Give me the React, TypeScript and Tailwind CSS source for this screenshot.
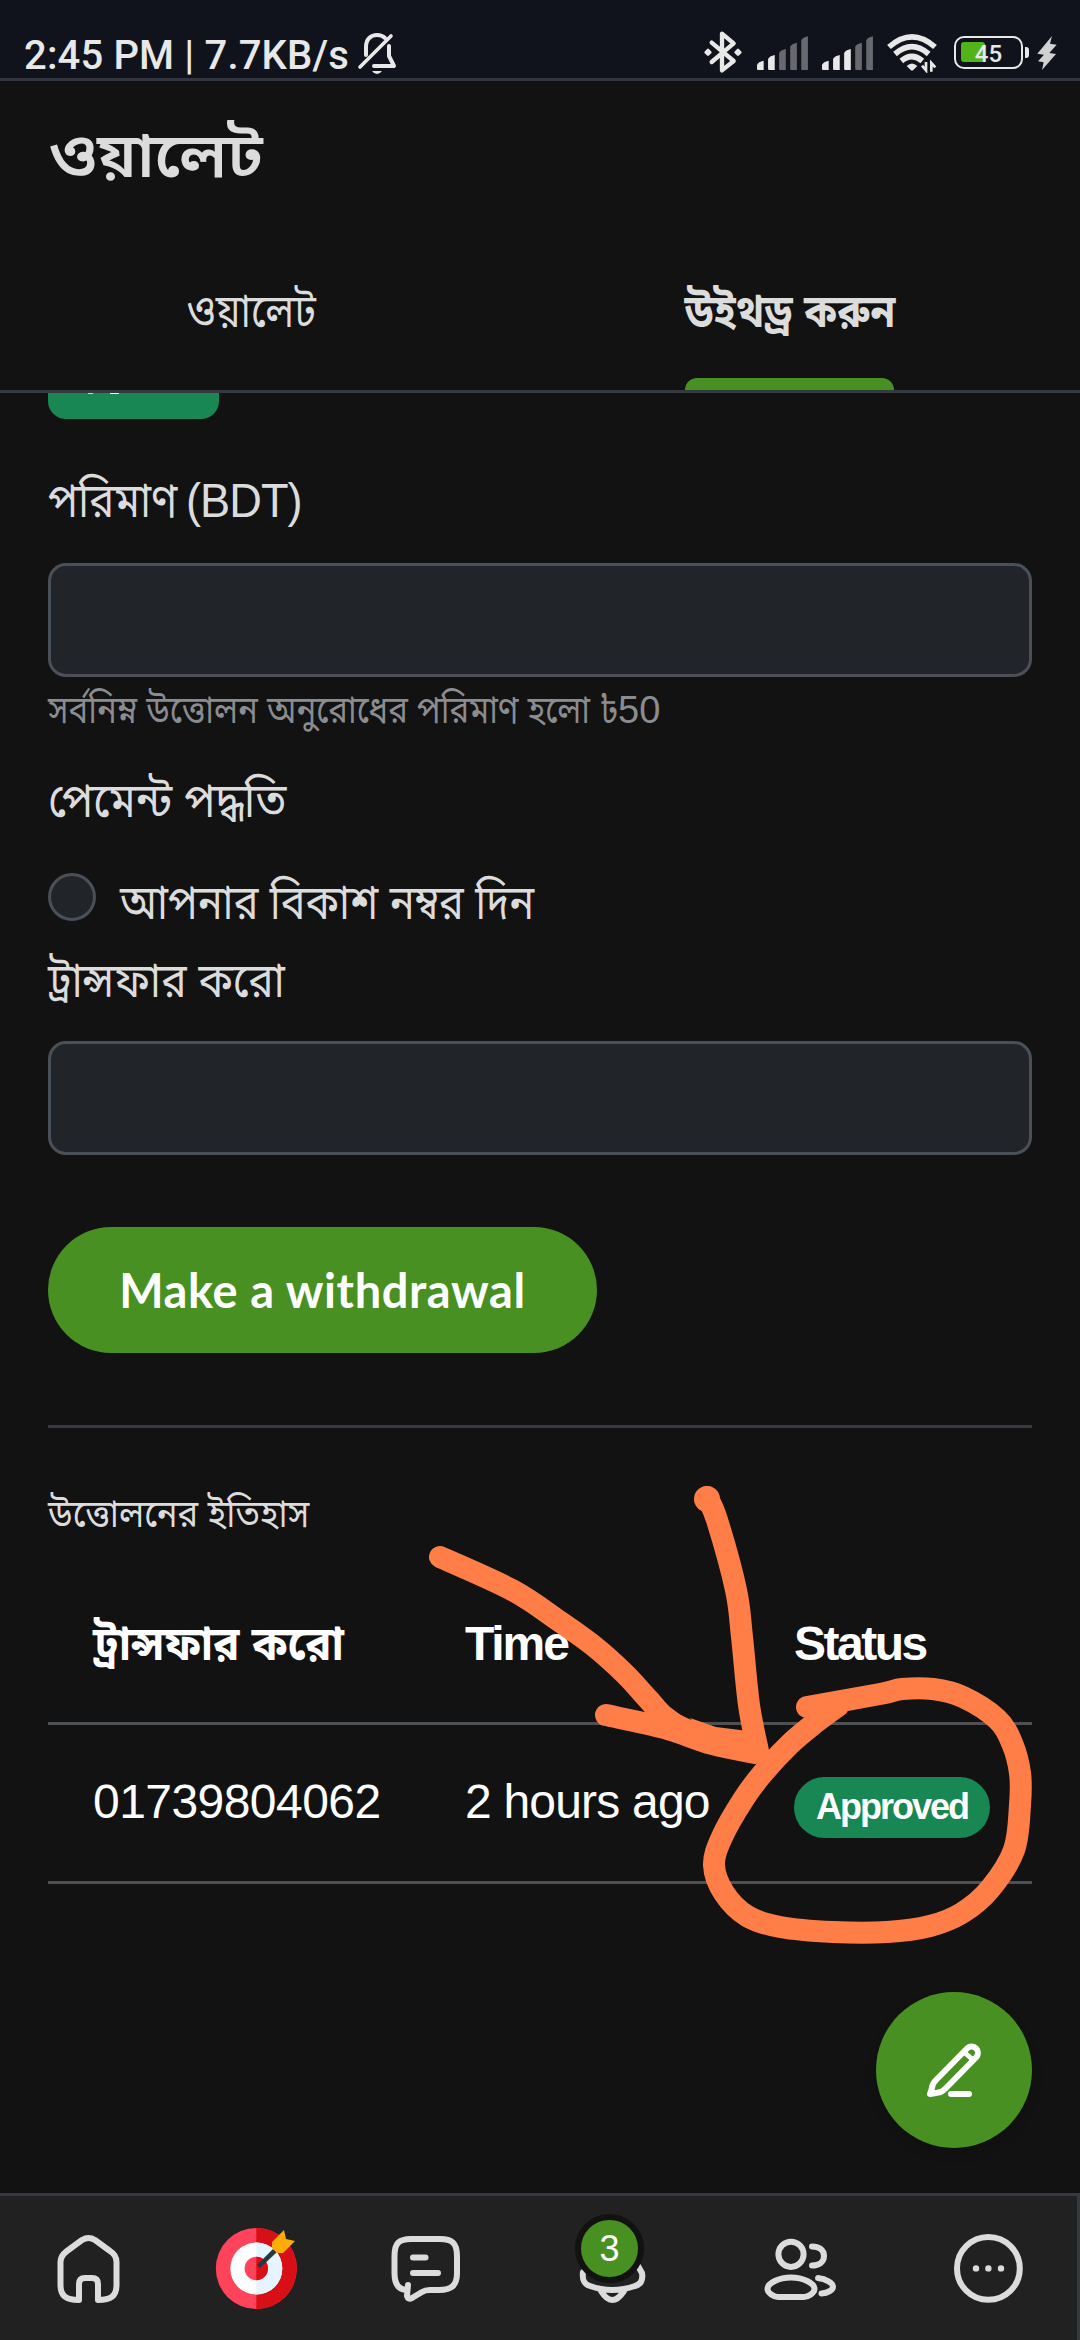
import type { ReactNode } from 'react'

const SANS = "font-['Liberation_Sans','Noto_Sans_Bengali','Noto_Sans',sans-serif]"

function MutedBell() {
  return (
    <svg width="42" height="46" viewBox="356 31 42 46" fill="none" stroke="#e8e8e8" strokeWidth="4" strokeLinecap="round" strokeLinejoin="round">
      <path d="M366 55V47C366 39 371 35 377 35C380 35 383 36 385 38" />
      <path d="M389 46V56L394 66H374" />
      <path d="M360 67L391 36" strokeWidth="3.6" />
      <path d="M372 71H382Q380 74 377 74T372 71Z" fill="#e8e8e8" stroke="none" />
    </svg>
  )
}

function Bluetooth() {
  return (
    <svg width="40" height="44" viewBox="126 90 120 132" fill="none" stroke="#e8e8e8" strokeWidth="13" strokeLinejoin="round" strokeLinecap="round">
      <path d="M152 128L218 183L183 211V101L218 130L152 186" />
      <path d="M141 150L148 157L141 164L134 157ZM231 150L238 157L231 164L224 157Z" fill="#e8e8e8" strokeWidth="8" />
    </svg>
  )
}

function Signal({ lit }: { lit: number }) {
  const tops = [182, 165, 147, 128, 109]
  return (
    <svg width="51" height="34" viewBox="288 108 153 102">
      {tops.map((top, i) => {
        const x = 288 + i * 33.2
        return (
          <path
            key={top}
            d={`M${x + 3} 210Q${x} 210 ${x} 207V${top + 12}Q${x + 4} ${top + 3} ${x + 20} ${top}V210Z`}
            fill={i < lit ? '#e8e8e8' : '#68696e'}
          />
        )
      })}
    </svg>
  )
}

function Wifi() {
  return (
    <svg width="50" height="40" viewBox="679 100 150 120" fill="none" stroke="#e8e8e8" strokeWidth="17">
      <path d="M685 142Q754 81 823 142" />
      <path d="M703 163Q754 119 804 163" />
      <path d="M722 184Q754 157 785 184" />
      <path d="M738 199Q754 184 770 199L757 212Q754 214 751 212Z" fill="#e8e8e8" stroke="none" />
      <path d="M796 187V212L784 198M812 216V190L824 203" strokeWidth="8" />
    </svg>
  )
}

function Battery() {
  return (
    <div className="flex items-center gap-[2px]">
      <div className="relative flex h-[33px] w-[69px] items-center justify-center rounded-[10px] border-[2.5px] border-[#e8e8e8]">
        <div className="absolute left-[5px] top-[4px] h-[20px] w-[24px] rounded-[3px] bg-[#52b41a]" />
        <span className="relative pt-[3px] font-[Roboto] text-[24px] font-medium leading-none text-[#e8e8e8]">45</span>
      </div>
      <div className="h-[11px] w-[4px] rounded-r-[3px] bg-[#e8e8e8]" />
    </div>
  )
}

function StatusBar() {
  return (
    <div className="flex h-[81px] items-start justify-between border-b-[3px] border-[#32363e] bg-[#10131b] pl-[24px]">
      <div className="flex pt-[31px]">
        <span className="mt-[1px] w-[332px] whitespace-nowrap font-[Roboto] text-[40px] font-medium leading-[47px] tracking-[0.15px] text-[#e8e8e8]">
          2:45 PM | 7.7KB/s
        </span>
        <MutedBell />
      </div>
      <div className="flex items-start pr-[23px] pt-[30px]">
        <Bluetooth />
        <div className="ml-[14px] mt-[6px]"><Signal lit={2} /></div>
        <div className="ml-[14px] mt-[6px]"><Signal lit={3} /></div>
        <div className="ml-[14px] mt-[3px]"><Wifi /></div>
        <div className="ml-[17px] mt-[6px]"><Battery /></div>
        <svg className="ml-[8px] mt-[6px]" width="20" height="34" viewBox="1129 108 60 102" fill="#d0d1d3">
          <path d="M1174 108L1130 161L1150 164L1132 184L1149 187L1144 210L1186 162L1166 159L1188 134L1168 131Z" />
        </svg>
      </div>
    </div>
  )
}

function Header() {
  return (
    <header className="h-[312px] border-b-[3px] border-[#343a40]">
      <h1 className="h-[153px] origin-left scale-x-[1.035] whitespace-nowrap pl-[47px] pt-[33px] text-[62px] font-semibold leading-[84px] text-[#dcdcdc]">ওয়ালেট</h1>
      <nav className="flex h-[156px] text-[46px] text-[#dcdcdc]">
        <div className="flex w-[503px] justify-center">
          <span className="scale-x-[0.86] pt-[41px] leading-[72px]">ওয়ালেট</span>
        </div>
        <div className="flex w-[573px] justify-center">
          <div className="flex w-[209px] flex-col items-center justify-between">
            <span className="scale-x-[0.88] whitespace-nowrap pt-[41px] font-bold leading-[72px]">উইথড্র করুন</span>
            <div className="h-[12px] w-full rounded-t-[12px] bg-[#489021]" />
          </div>
        </div>
      </nav>
    </header>
  )
}

function Field() {
  return <div className="h-[114px] rounded-[18px] border-[3px] border-[#495057] bg-[#212529]" />
}

function WithdrawForm() {
  return (
    <form className="flex flex-col items-start text-[48px] text-[#dcdcdc]">
      {/* balance badge, scrolled under the header */}
      <div className="flex h-[26px] w-[171px] gap-[17px] rounded-b-[18px] bg-[#198754] pl-[40px]">
        <div className="h-px w-[5px] bg-white/70" />
        <div className="h-px w-[9px] bg-white" />
      </div>
      <label className="mt-[46px] flex whitespace-nowrap leading-[72px]">
        <span className="w-[138px] origin-left scale-x-[0.875]">পরিমাণ</span>
        <span className="origin-left scale-x-[0.94] tracking-[-1px]">(BDT)</span>
      </label>
      <div className="mt-[26px] w-full"><Field /></div>
      <p className="mt-[3px] flex whitespace-nowrap text-[38px] leading-[60px] text-[#8b8c90]">
        <span className="w-[570px] origin-left scale-x-[0.868]">সর্বনিম্ন উত্তোলন অনুরোধের পরিমাণ হলো ৳</span>
        <span>50</span>
      </p>
      <label className="mt-[25px] origin-left scale-x-[0.91] leading-[72px]">পেমেন্ট পদ্ধতি</label>
      <div className="mt-[30px] flex h-[72px]">
        <div className="mt-[6px] size-[48px] rounded-full border-[3px] border-[#495057] bg-[#212529]" />
        <span className="ml-[24px] origin-left scale-x-[0.863] leading-[72px]">আপনার বিকাশ নম্বর দিন</span>
      </div>
      <label className="mt-[6px] origin-left scale-x-[0.888] leading-[72px]">ট্রান্সফার করো</label>
      <div className="mt-[24px] w-full"><Field /></div>
      <button
        type="button"
        className="mt-[72px] h-[126px] w-[549px] whitespace-nowrap rounded-full bg-[#489021] font-[Lato] text-[47px] font-bold tracking-[0.6px] text-white"
      >
        Make a withdrawal
      </button>
    </form>
  )
}

function Cell({ children, className }: { children: ReactNode; className: string }) {
  return <div className={`whitespace-nowrap ${className}`}>{children}</div>
}

function History() {
  return (
    <section>
      <h2 className="mt-[56px] origin-left scale-x-[0.911] text-[38px] leading-[60px] text-[#dcdcdc]">উত্তোলনের ইতিহাস</h2>
      <div className="mt-[64px] text-[48px] leading-[72px] text-white">
        <div className="flex h-[117px] border-b-[3px] border-[#4d5154] font-bold">
          <Cell className="w-[417px] pl-[45px]">
            <span className="inline-block origin-left scale-x-[0.915]">ট্রান্সফার করো</span>
          </Cell>
          <Cell className="w-[329px] tracking-[-2.1px]">Time</Cell>
          <Cell className="tracking-[-2.5px]">Status</Cell>
        </div>
        <div className="flex h-[159px] border-b-[3px] border-[#4d5154] pt-[41px]">
          <Cell className="w-[417px] pl-[45px] tracking-[-0.55px]">01739804062</Cell>
          <Cell className="w-[329px] tracking-[-0.8px]">2 hours ago</Cell>
          <Cell className="mt-[11px] h-[61px] w-[196px] rounded-full bg-[#198754] text-center text-[36px] font-bold leading-[59px] tracking-[-2px]">
            Approved
          </Cell>
        </div>
      </div>
    </section>
  )
}

type Point = [number, number]

// Catmull-Rom spline through the points of a pen stroke
function penPath(pts: Point[]) {
  let d = `M${pts[0][0]} ${pts[0][1]}`
  for (let i = 0; i < pts.length - 1; i++) {
    const p0 = pts[i - 1] || pts[i]
    const p1 = pts[i]
    const p2 = pts[i + 1]
    const p3 = pts[i + 2] || p2
    d += `C${p1[0] + (p2[0] - p0[0]) / 6} ${p1[1] + (p2[1] - p0[1]) / 6} ${p2[0] - (p3[0] - p1[0]) / 6} ${p2[1] - (p3[1] - p1[1]) / 6} ${p2[0]} ${p2[1]}`
  }
  return d
}

const STROKES: Point[][] = [
  [[440, 1557], [512, 1590], [559, 1621], [595, 1647], [625, 1674], [648, 1699], [665, 1717], [690, 1731], [757, 1752]],
  [[606, 1715], [664, 1728], [712, 1744], [755, 1753]],
  [[707, 1497], [717, 1520], [736, 1590], [742, 1637], [749, 1705], [758, 1751]],
  [
    [807, 1707], [880, 1694], [902, 1689], [933, 1689], [963, 1697], [997, 1719], [1012, 1743], [1020, 1773], [1020, 1805],
    [1014, 1850], [990, 1889], [962, 1913], [930, 1926], [887, 1932], [833, 1932], [780, 1927], [747, 1916],
    [724, 1893], [714, 1865], [722, 1837], [743, 1800], [763, 1773], [790, 1744], [815, 1723], [838, 1706],
  ],
]

// Hand-drawn arrow and ring over the status column
function Markup() {
  return (
    <svg className="absolute left-[420px] top-[1460px]" width="660" height="500" viewBox="420 1460 660 500" fill="none" stroke="#ff7e47" strokeWidth="22" strokeLinecap="round" strokeLinejoin="round">
      {STROKES.map((pts, i) => <path key={i} d={penPath(pts)} />)}
      <circle cx="707" cy="1499" r="13" fill="#ff7e47" stroke="none" />
      <path d="M690 1718L716 1727L748 1731L756 1750L710 1741Z" fill="#ff7e47" stroke="none" />
    </svg>
  )
}

function ComposeButton() {
  return (
    <button type="button" className="absolute left-[876px] top-[1992px] size-[156px] rounded-full bg-[#489021] shadow-[0_6px_12px_rgba(0,0,0,0.15)]">
      <svg width="156" height="156" viewBox="876 1992 156 156" fill="none" stroke="#fff" strokeWidth="6" strokeLinejoin="round" strokeLinecap="round">
        <path d="M967.5 2048L936 2080Q932 2084 932 2088L930 2094L936 2093Q941 2093 945 2089L976.5 2057A6.4 6.4 0 0 0 967.5 2048Z" />
        <path d="M964 2052L973 2060" strokeWidth="5" />
        <path d="M951 2094H969" />
      </svg>
    </button>
  )
}

function BottomNav() {
  return (
    <nav className="absolute left-0 top-[2193px] flex h-[147px] w-[1080px] border-t-[3px] border-[#343a40] bg-[#212121]">
      <div className="relative grow">
        <svg width="1077" height="144" viewBox="0 2196 1077 144" fill="none" stroke="#dcdcdc" strokeWidth="6" strokeLinecap="round" strokeLinejoin="round">
          {/* home */}
          <path d="M79 2300V2284Q79 2278 85 2278H92Q98 2278 98 2284V2300C111 2300 116.500 2296 116.500 2285V2262Q116.500 2255 110 2251L95 2240Q88.500 2236 82 2240L67 2251Q60.500 2256 60.500 2262V2285C60.500 2296 66 2300 79 2300Z" />
          {/* goals */}
          <g stroke="none">
            <circle cx="256.300" cy="2268.500" r="40.500" fill="#ff435a" />
            <path d="M256.300 2228A40.500 40.500 0 0 1 256.300 2309Z" fill="#d80f17" />
            <circle cx="256.300" cy="2268.500" r="26" fill="#fff" />
            <path d="M256.300 2242.500A26 26 0 0 1 256.300 2294.500Z" fill="#e5f4fe" />
            <circle cx="256.300" cy="2268.500" r="11.700" fill="#ff435a" />
            <path d="M256.300 2256.800A11.700 11.700 0 0 1 256.300 2280.200Z" fill="#d80f17" />
            <path d="M257 2265L273 2249L277 2252L260 2268Z" fill="#26393d" />
            <path d="M284 2230L272 2242V2248L277 2253L283 2253L295 2241L286 2239Z" fill="#ffab08" />
          </g>
          {/* messages */}
          <path d="M408 2285L407 2296Q408 2300 412 2298L422 2292Q425 2290 430 2290H439C452 2290 457 2285 457 2273V2256C457 2243 452 2239 440 2239H411C399 2239 394.500 2243 394.500 2256V2273Q394.500 2289 406 2290" />
          <path d="M413 2257.500H425.500M413 2273H438" />
          {/* notifications */}
          <path d="M583 2272C582 2280 584 2284 590 2286Q612 2294 635 2286C642 2284 643 2279 642 2273L638 2266M601 2291Q612 2309 624 2291" />
          {/* friends */}
          <ellipse cx="791" cy="2254.300" rx="12.600" ry="12.600" />
          <path d="M791 2277.500C803 2277.500 814.500 2283 814.500 2289C814.500 2293 808 2297 804 2297H778C774 2297 767.500 2293 767.500 2289C767.500 2283 779 2277.500 791 2277.500Z" />
          <path d="M812 2246.500C819 2246.500 824 2250 824 2256S819 2265.500 812 2265.500M818 2278C826 2279 833 2283 833 2286.500S828 2293 821.500 2293.500" />
          {/* more */}
          <circle cx="988.400" cy="2268.400" r="31.400" />
          <g fill="#dcdcdc" stroke="none">
            <circle cx="976" cy="2268.400" r="3.200" />
            <circle cx="988.400" cy="2268.400" r="3.200" />
            <circle cx="1001" cy="2268.400" r="3.200" />
          </g>
        </svg>
        <span className="absolute left-[575px] top-[18px] flex size-[69px] items-center justify-center rounded-full border-[6px] border-[#121212] bg-[#489021] text-[36px] leading-none text-white">
          3
        </span>
      </div>
      <div className="w-[3px] bg-[#343a40]" />
    </nav>
  )
}

export default function App() {
  return (
    <div className={`relative h-[2340px] w-[1080px] overflow-hidden bg-[#121212] ${SANS}`}>
      <StatusBar />
      <Header />
      <main className="px-[48px]">
        <WithdrawForm />
        <hr className="mt-[72px] border-t-[3px] border-[#343a40]" />
        <History />
      </main>
      <Markup />
      <ComposeButton />
      <BottomNav />
    </div>
  )
}
